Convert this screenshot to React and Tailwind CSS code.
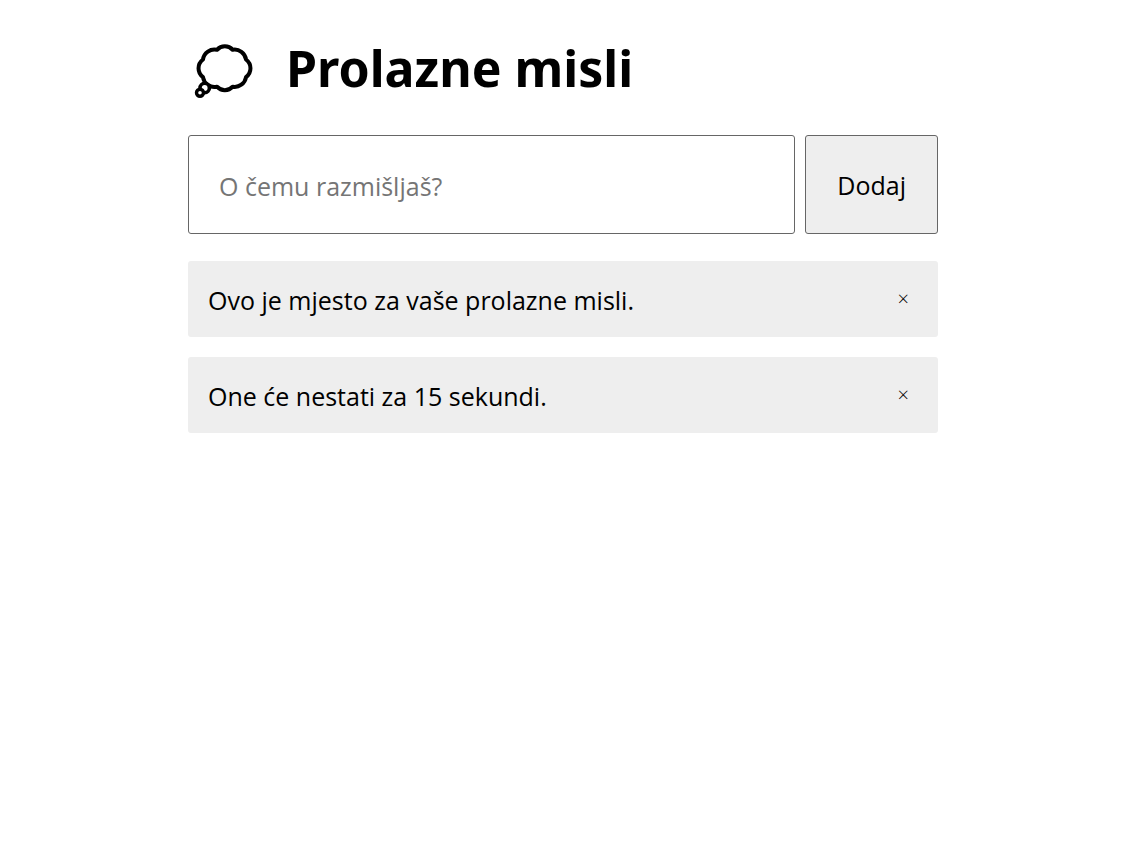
import { useState } from "react";

function ThoughtIcon() {
  return (
    <svg viewBox="0 0 72 72" className="size-[72px] shrink-0" fill="none" stroke="#000" strokeWidth="4" strokeLinejoin="round" aria-hidden="true">
      <path d="M29 17.8A10.5 10.5 0 0 1 44.7 17.8A11.5 11.5 0 0 1 58 27.5A11 11 0 0 1 58 45.2A11.5 11.5 0 0 1 44.7 54.7A10.5 10.5 0 0 1 29 54.7A11.5 11.5 0 0 1 15 45.2A11 11 0 0 1 15 27.5A11.5 11.5 0 0 1 29 17.8Z" />
      <circle cx="16.7" cy="56" r="4.7" fill="#fff" strokeWidth="3.6" />
      <circle cx="12" cy="60.7" r="3.5" fill="#fff" strokeWidth="3.4" />
    </svg>
  );
}

export default function App() {
  const [text, setText] = useState("");
  const [thoughts, setThoughts] = useState([
    { id: 1, text: "Ovo je mjesto za vaše prolazne misli." },
    { id: 2, text: "One će nestati za 15 sekundi." },
  ]);

  const add = (e) => {
    e.preventDefault();
    if (!text.trim()) return;
    setThoughts([{ id: Date.now(), text }, ...thoughts]);
    setText("");
  };

  return (
    <div className="min-h-screen bg-white pr-[10px] font-['Open_Sans','Noto_Sans',sans-serif] text-black">
      <div className="mx-auto max-w-[766px] px-2 pt-8">
        <header className="flex items-center gap-[26px]">
          <ThoughtIcon />
          <h1 className="font-['Noto_Sans',sans-serif] text-[50px] leading-[72px] font-bold">Prolazne misli</h1>
        </header>
        <main className="pt-[31px]">
          <form onSubmit={add} className="flex gap-[10px]">
            <input
              type="text"
              aria-label="O čemu razmišljaš?"
              placeholder="O čemu razmišljaš?"
              value={text}
              onChange={(e) => setText(e.target.value)}
              className="h-[99px] min-w-0 flex-1 rounded-[3px] border border-[#666666] px-[30px] pt-[2px] text-[25px] placeholder:text-[#757575]"
            />
            <button type="submit" className="rounded-[3px] border border-[#666666] bg-[#eeeeee] px-[31px] pt-[2px] text-[25px]">
              Dodaj
            </button>
          </form>
          <ul className="mt-[27px] flex flex-col gap-5">
            {thoughts.map((t) => (
              <li key={t.id} className="flex items-center justify-between rounded-[3px] bg-[#eeeeee] px-5 py-[19px]">
                <span className="pt-[2px] text-[25px] leading-9">{t.text}</span>
                <button
                  type="button"
                  aria-label="Ukloni misao"
                  onClick={() => setThoughts(thoughts.filter((x) => x.id !== t.id))}
                  className="px-[9px] text-xl font-light"
                >
                  ×
                </button>
              </li>
            ))}
          </ul>
        </main>
      </div>
    </div>
  );
}
